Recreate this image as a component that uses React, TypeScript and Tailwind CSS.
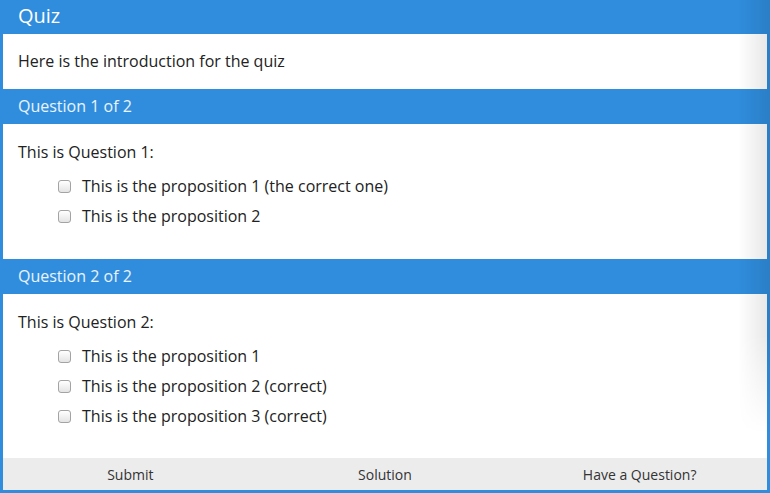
import React from "react";

function Box() {
  return (
    <span className="block w-[13px] h-[13px] shrink-0 rounded-[3px] border border-[#a3a3a3] bg-gradient-to-b from-white to-[#e4e4e4]" />
  );
}

function Prop({ label }: { label: string }) {
  return (
    <div className="flex items-center h-[22px] gap-[11px]">
      <Box />
      <span>{label}</span>
    </div>
  );
}

function Question({
  n,
  text,
  props,
  pb,
}: {
  n: number;
  text: string;
  props: string[];
  pb: string;
}) {
  return (
    <>
      <div className="h-[35px] flex items-center pl-[15px] pb-[2px] text-[16px] text-white/90">
        Question {n} of 2
      </div>
      <div className={"bg-white pl-[15px] pt-[17px] " + pb}>
        <div className="h-[22px] leading-[22px]">{text}</div>
        <div className="mt-[12px] ml-[40px] flex flex-col gap-[8px]">
          {props.map((p) => (
            <Prop key={p} label={p} />
          ))}
        </div>
      </div>
    </>
  );
}

export default function App() {
  return (
    <div
      className="relative w-[770px] h-[493px] overflow-hidden bg-[#308ddd] text-[#222] text-[16px]"
      style={{ fontFamily: '"Open Sans", "Noto Sans", sans-serif' }}
    >
      <div className="flex flex-col px-[3px]">
        <div className="h-[34px] flex items-center pl-[15px] pb-[2px] text-[20px] text-white">
          Quiz
        </div>
        <div className="h-[55px] bg-white pl-[15px] pb-[2px] flex items-center">
          Here is the introduction for the quiz
        </div>
        <Question
          n={1}
          text="This is Question 1:"
          props={["This is the proposition 1 (the correct one)", "This is the proposition 2"]}
          pb="pb-[32px]"
        />
        <Question
          n={2}
          text="This is Question 2:"
          props={[
            "This is the proposition 1",
            "This is the proposition 2 (correct)",
            "This is the proposition 3 (correct)",
          ]}
          pb="pb-[31px]"
        />
        <div className="h-[32px] bg-[#ececec] grid grid-cols-3 text-[14px] text-[#333]">
          <div className="flex items-center justify-center">Submit</div>
          <div className="flex items-center justify-center">Solution</div>
          <div className="flex items-center justify-center">Have a Question?</div>
        </div>
      </div>
      <div className="pointer-events-none absolute top-0 right-0 w-[32px] h-[493px] bg-gradient-to-r from-transparent to-black/10 [mask-image:linear-gradient(to_bottom,black_68%,transparent_88%)]" />
    </div>
  );
}
